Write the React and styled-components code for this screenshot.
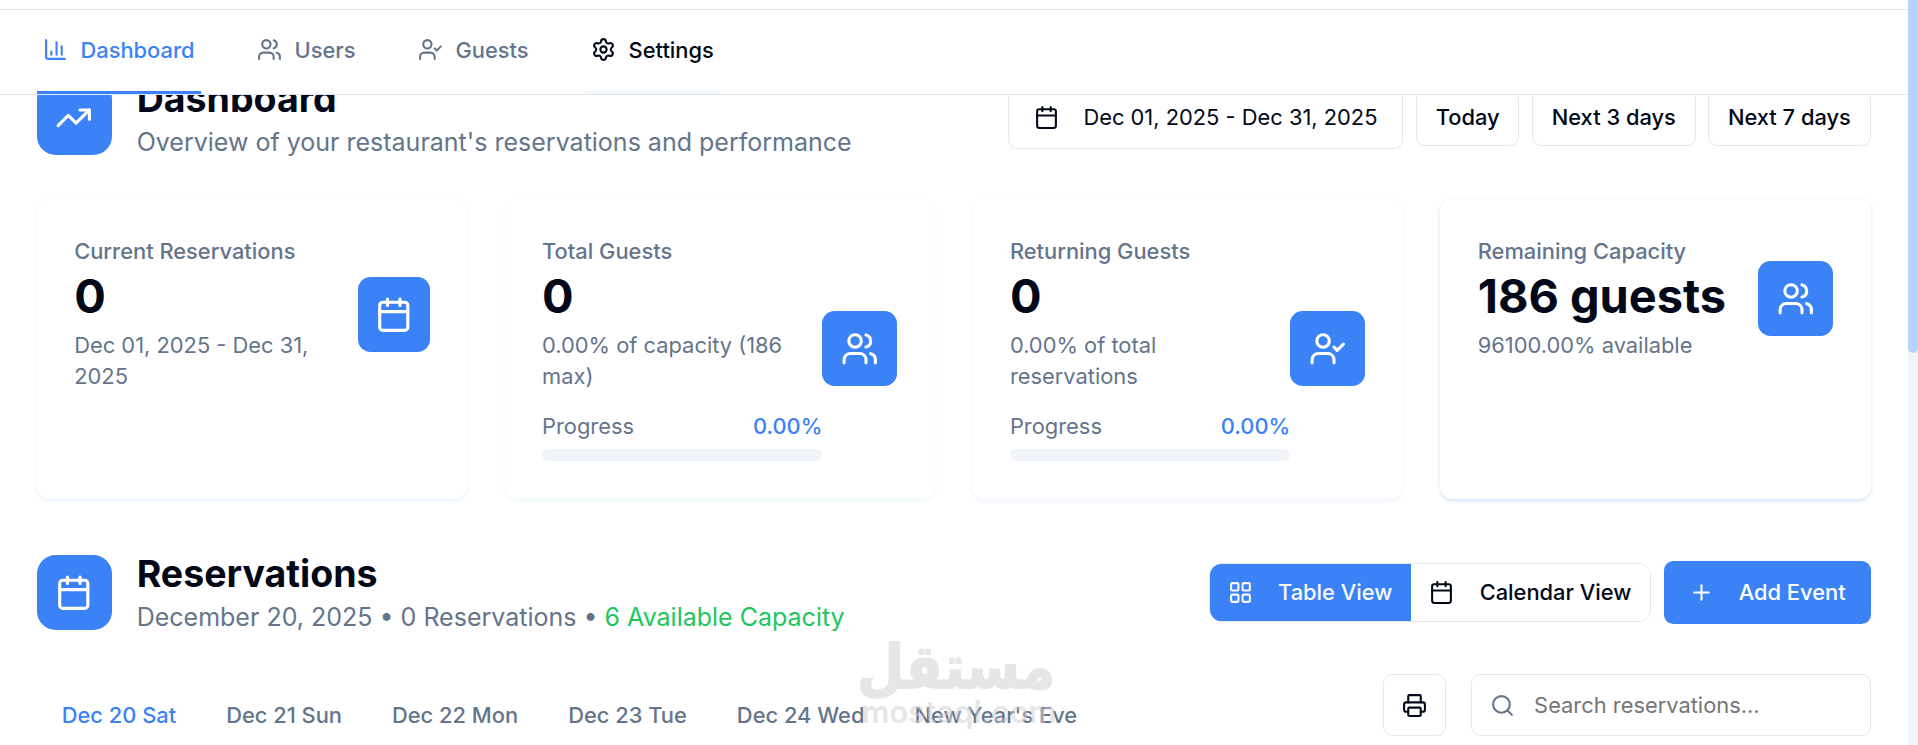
import React from 'react';
import styled, { createGlobalStyle } from 'styled-components';
import {
    Calendar,
    LayoutGrid,
    Plus,
    Printer,
    Search,
    Settings,
    TrendingUp,
} from 'lucide-react';

const days = ['Dec 20 Sat', 'Dec 21 Sun', 'Dec 22 Mon', 'Dec 23 Tue', 'Dec 24 Wed', "New Year's Eve"];

const stats = [
    { label: 'Current Reservations', value: '0', note: 'Dec 01, 2025 - Dec 31,\n2025', icon: Calendar, tint: '#e8f2ff', narrow: true },
    { label: 'Total Guests', value: '0', note: '0.00% of capacity (186\nmax)', icon: UsersIcon, tint: '#ebfdf1', progress: '0.00%' },
    { label: 'Returning Guests', value: '0', note: '0.00% of total\nreservations', icon: UserCheckIcon, tint: '#f7f0ff', progress: '0.00%' },
    { label: 'Remaining Capacity', value: '186 guests', note: '96100.00% available', icon: UsersIcon, tint: '#d3e5fe' },
];

function Icon({ children }) {
    return (
        <svg width="24" height="24" viewBox="0 0 24 24" fill="none" stroke="currentColor" strokeWidth="2" strokeLinecap="round" strokeLinejoin="round">
            {children}
        </svg>
    )
}

function ChartIcon() {
    return (
        <Icon>
            <path d="M3 3v16a2 2 0 0 0 2 2h16" />
            <path d="M8 17v-3" />
            <path d="M13 17V5" />
            <path d="M18 17V9" />
        </Icon>
    )
}

function UsersIcon() {
    return (
        <Icon>
            <path d="M16 21v-2a4 4 0 0 0-4-4H6a4 4 0 0 0-4 4v2" />
            <circle cx="9" cy="7" r="4" />
            <path d="M22 21v-2a4 4 0 0 0-3-3.87" />
            <path d="M16 3.13a4 4 0 0 1 0 7.75" />
        </Icon>
    )
}

function UserCheckIcon() {
    return (
        <Icon>
            <path d="M16 21v-2a4 4 0 0 0-4-4H6a4 4 0 0 0-4 4v2" />
            <circle cx="9" cy="7" r="4" />
            <path d="m16 11 2 2 4-4" />
        </Icon>
    )
}

function StatCard({ label, value, note, icon: StatIcon, tint, progress, narrow }) {
    return (
        <Card $tint={tint}>
            <CardBody>
                <CardInfo>
                    <CardLabel>{label}</CardLabel>
                    <CardValue>{value}</CardValue>
                    <CardNote>{note}</CardNote>
                    {progress && (
                        <>
                            <ProgressRow>
                                <span>Progress</span>
                                <strong>{progress}</strong>
                            </ProgressRow>
                            <ProgressBar />
                        </>
                    )}
                </CardInfo>
                <CardIcon $narrow={narrow}>
                    <StatIcon />
                </CardIcon>
            </CardBody>
        </Card>
    )
}

function App() {
    return (
        <>
            <GlobalStyle />
            <Screen>
                <Page>
                    <Nav>
                        <NavItem $active><ChartIcon />Dashboard</NavItem>
                        <NavItem><UsersIcon />Users</NavItem>
                        <NavItem><UserCheckIcon />Guests</NavItem>
                        <NavItem $hover><Settings />Settings</NavItem>
                    </Nav>
                    <Content>
                        <Header>
                            <HeaderIcon><TrendingUp /></HeaderIcon>
                            <HeaderText>
                                <Title>Dashboard</Title>
                                <Subtitle>Overview of your restaurant's reservations and performance</Subtitle>
                            </HeaderText>
                            <Actions>
                                <DateButton><Calendar />Dec 01, 2025 - Dec 31, 2025</DateButton>
                                <Button>Today</Button>
                                <Button>Next 3 days</Button>
                                <Button>Next 7 days</Button>
                            </Actions>
                        </Header>
                        <Stats>
                            {stats.map((stat) => <StatCard key={stat.label} {...stat} />)}
                        </Stats>
                        <Header>
                            <HeaderIcon><Calendar /></HeaderIcon>
                            <HeaderText>
                                <Title>Reservations</Title>
                                <Subtitle>
                                    December 20, 2025 • 0 Reservations • <Available>6 Available Capacity</Available>
                                </Subtitle>
                            </HeaderText>
                            <Actions>
                                <ViewSwitch>
                                    <ViewButton $active><LayoutGrid />Table View</ViewButton>
                                    <ViewButton><Calendar />Calendar View</ViewButton>
                                </ViewSwitch>
                                <AddButton><Plus />Add Event</AddButton>
                            </Actions>
                        </Header>
                        <Toolbar>
                            <Days>
                                {days.map((day, i) => <Day key={day} $active={i === 0}>{day}</Day>)}
                            </Days>
                            <PrintButton><Printer /></PrintButton>
                            <SearchBox>
                                <Search />
                                <input placeholder="Search reservations..." />
                            </SearchBox>
                        </Toolbar>
                    </Content>
                </Page>
                <ScrollTrack><ScrollThumb /></ScrollTrack>
                <Watermark>
                    <WatermarkName lang="ar">مستقل</WatermarkName>
                    <WatermarkSite>mostaql.com</WatermarkSite>
                </Watermark>
            </Screen>
        </>
    )
}

export default App


const GlobalStyle = createGlobalStyle`
    * {
        box-sizing: border-box;
    }

    html {
        font-size: 25px;
    }

    body {
        margin: 0;
        overflow: hidden;
        background: #fff;
        color: #020817;
        font-family: Inter, "Liberation Sans", sans-serif;
    }

    h2, p {
        margin: 0;
    }

    button, input {
        font-family: inherit;
        color: inherit;
    }
`
const Screen = styled.div`
    position: relative;
    display: flex;
    height: 745px;
    overflow: hidden;
`
const Page = styled.div`
    flex: 1;
    min-width: 0;
    display: flex;
    flex-direction: column;
    padding-top: 9px;
`
const Nav = styled.nav`
    position: relative;
    z-index: 1;
    flex: none;
    display: flex;
    gap: 2rem;
    height: 86px;
    padding: 0 36.7px;
    background: #fff;
    border-top: 1px solid #e2e8f0;
    border-bottom: 1px solid #e2e8f0;
`
const NavItem = styled.a`
    display: flex;
    align-items: center;
    gap: 0.5rem;
    padding: 0 0.25rem 2px;
    border-bottom: 3px solid ${(p) => (p.$active ? '#3b82f6' : p.$hover ? '#f1f5f9' : 'transparent')};
    color: ${(p) => (p.$active ? '#3b82f6' : p.$hover ? '#020817' : '#64748b')};
    font-size: 0.875rem;
    font-weight: 500;

    svg {
        width: 1rem;
        height: 1rem;
    }
`
const Content = styled.main`
    display: flex;
    flex-direction: column;
    flex: none;
    margin-top: -21.25px;
    padding: 0 37.4px 0 36.7px;
`
const Header = styled.header`
    display: flex;
    align-items: center;
    height: 3.5rem;
`
const HeaderIcon = styled.div`
    padding: 0.75rem;
    background: #3b82f6;
    border-radius: 0.75rem;
    color: #fff;

    svg {
        display: block;
        width: 1.5rem;
        height: 1.5rem;
    }
`
const HeaderText = styled.div`
    margin-left: 1rem;
`
const Title = styled.h2`
    font-size: 1.5rem;
    line-height: 2rem;
    font-weight: 700;
`
const Subtitle = styled.p`
    color: #64748b;
    font-size: 1rem;
    line-height: 1.5rem;
`
const Available = styled.span`
    color: #22c55e;
`
const Actions = styled.div`
    display: flex;
    align-items: center;
    gap: 0.5rem;
    margin-left: auto;
`
const Button = styled.button`
    display: flex;
    align-items: center;
    justify-content: center;
    gap: 1rem;
    height: 2.25rem;
    padding: 0 0.75rem 1px;
    background: #fff;
    border: 1px solid #e2e8f0;
    border-radius: 0.375rem;
    font-size: 0.875rem;
    font-weight: 500;
    white-space: nowrap;

    svg {
        width: 1rem;
        height: 1rem;
    }
`
const DateButton = styled(Button)`
    gap: 24.5px;
    height: 2.5rem;
    padding: 0 1rem 1px;
    font-weight: 400;
`
const AddButton = styled(Button)`
    height: 2.5rem;
    padding: 0 1rem 1px;
    background: #3b82f6;
    border: 0;
    color: #fff;
`
const ViewSwitch = styled.div`
    display: flex;
    overflow: hidden;
    border: 1px solid #e2e8f0;
    border-radius: 0.5rem;
`
const ViewButton = styled(Button)`
    gap: 25.5px;
    padding-left: 18px;
    border: 0;
    border-radius: 0;
    background: ${(p) => (p.$active ? '#3b82f6' : '#fff')};
    color: ${(p) => (p.$active ? '#f8fafc' : '#020817')};
`
const Stats = styled.section`
    display: grid;
    grid-template-columns: repeat(4, 1fr);
    gap: 1.5rem;
    height: 300px;
    margin: 1.5rem 0 2rem;
`
const Card = styled.div`
    padding: 1.5rem;
    background: #fff;
    border-radius: 0.5rem;
    box-shadow: 0 1.5px 4px 0 ${(p) => p.$tint};
`
const CardBody = styled.div`
    display: flex;
    align-items: center;
`
const CardInfo = styled.div`
    flex: 1;
    min-width: 0;
`
const CardLabel = styled.p`
    color: #64748b;
    font-size: 0.875rem;
    line-height: 1.25rem;
    font-weight: 500;
`
const CardValue = styled.p`
    font-size: 1.875rem;
    line-height: 2.25rem;
    font-weight: 700;
    white-space: nowrap;
`
const CardNote = styled.p`
    margin-top: 0.25rem;
    color: #64748b;
    font-size: 0.875rem;
    line-height: 1.25rem;
    white-space: pre;
`
const ProgressRow = styled.div`
    display: flex;
    justify-content: space-between;
    margin-top: 0.75rem;
    color: #64748b;
    font-size: 0.875rem;
    line-height: 1.25rem;

    strong {
        color: #3b82f6;
        font-weight: 500;
    }
`
const ProgressBar = styled.div`
    height: 0.5rem;
    margin-top: 0.25rem;
    background: #f1f5f9;
    border-radius: 0.25rem;
`
const CardIcon = styled.div`
    flex: none;
    display: flex;
    align-items: center;
    justify-content: center;
    width: ${(p) => (p.$narrow ? '72px' : '3rem')};
    height: 3rem;
    background: #3b82f6;
    border-radius: 0.5rem;
    color: #fff;

    svg {
        width: 1.5rem;
        height: 1.5rem;
    }
`
const Toolbar = styled.div`
    display: flex;
    align-items: flex-start;
    margin-top: 1.5rem;
`
const Days = styled.div`
    display: flex;
    margin-right: auto;
`
const Day = styled.div`
    padding: 26px 1rem 1rem;
    color: ${(p) => (p.$active ? '#3b82f6' : '#64748b')};
    font-size: 0.875rem;
    line-height: 1.25rem;
    font-weight: 500;
    white-space: nowrap;
`
const PrintButton = styled(Button)`
    width: 2.5rem;
    height: 2.5rem;
    padding: 0;
`
const SearchBox = styled.label`
    display: flex;
    align-items: center;
    width: 16rem;
    height: 2.5rem;
    margin-left: 1rem;
    padding: 0 0.75rem 0 18px;
    border: 1px solid #e2e8f0;
    border-radius: 0.375rem;

    svg {
        flex: none;
        width: 1rem;
        height: 1rem;
        color: #64748b;
    }

    input {
        flex: 1;
        min-width: 0;
        margin-left: 19.5px;
        padding: 0;
        background: none;
        border: 0;
        font-size: 0.875rem;
    }

    input::placeholder {
        color: #757575;
    }
`
const ScrollTrack = styled.div`
    width: 10px;
    background: #f1f5f9;
`
const ScrollThumb = styled.div`
    height: 353px;
    background: #b8d3f9;
    border-radius: 0 0 5px 5px;
`
const Watermark = styled.div`
    position: absolute;
    left: 859px;
    top: 635px;
    z-index: 2;
    width: 200px;
    color: #cfcfcf;
    opacity: 0.5;
    text-align: center;
    pointer-events: none;
`
const WatermarkName = styled.div`
    height: 59px;
    padding-right: 4px;
    font-family: "DejaVu Sans", sans-serif;
    font-size: 66px;
    line-height: 66px;
    font-weight: 700;
    direction: rtl;
    text-align: right;
    white-space: nowrap;
    transform: scale(0.82, 0.92);
    transform-origin: 196px 50%;
    -webkit-text-stroke: 2px #cfcfcf;
`
const WatermarkSite = styled.div`
    font-family: Inter, sans-serif;
    font-size: 31px;
    line-height: 36px;
    font-weight: 600;
`
